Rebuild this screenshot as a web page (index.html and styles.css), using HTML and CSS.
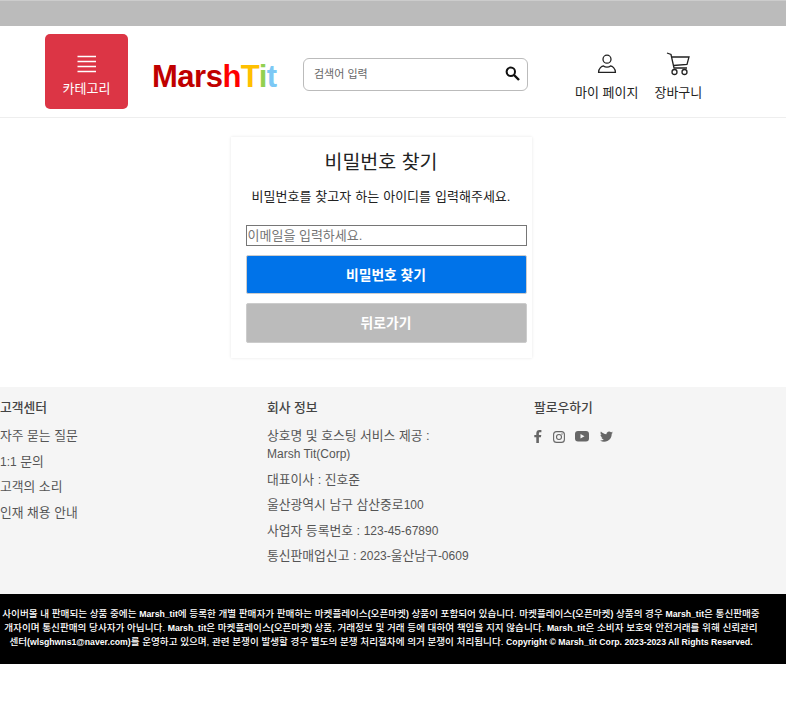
FILE: index.html
```html
<!DOCTYPE html>
<html lang="ko">
<head>
<meta charset="utf-8">
<title>비밀번호 찾기</title>
<link rel="stylesheet" href="styles.css">
</head>
<body>
<div class="topbar"></div>
<header class="header">
  <a class="category">
    <svg class="burger" width="20" height="18" viewBox="0 0 20 18"><path d="M0.500 1.500h18.500M0.500 6.500h18.500M0.500 11.500h18.500M0.500 16.500h18.500" stroke="#fff" stroke-width="1.500" fill="none"/></svg>
    <span>카테고리</span>
  </a>
  <div class="logo"><span class="c-dark">Mars</span><span class="c-red">h</span><span class="c-o">T</span><span class="c-g">i</span><span class="c-b">t</span></div>
  <div class="search">
    <span class="search-text">검색어 입력</span>
    <svg width="15" height="15" viewBox="0 0 15 15"><circle cx="5.800" cy="5.800" r="4.200" fill="none" stroke="#111" stroke-width="2"/><path d="M9 9l5 5" stroke="#111" stroke-width="2.400" fill="none"/></svg>
  </div>
  <nav class="nav">
    <a class="nav-item nav-my">
      <svg width="20" height="20" viewBox="0 0 20 20"><circle cx="10" cy="5.200" r="4" fill="none" stroke="#222" stroke-width="1.300"/><path d="M1.600 18.300c0-4 3.200-6.300 4.900-6.300 1 .8 2.100 1.100 3.500 1.100s2.500-.3 3.500-1.100c1.700 0 4.900 2.300 4.900 6.300z" fill="none" stroke="#222" stroke-width="1.300"/></svg>
      <span>마이 페이지</span>
    </a>
    <a class="nav-item nav-cart">
      <svg width="24" height="24" viewBox="0 0 24 24"><path d="M1 1l4 1.500 3 13.500h13M5.600 5H23l-2 7.500L7.500 13.500" fill="none" stroke="#222" stroke-width="1.300"/><circle cx="8.500" cy="20" r="2.500" fill="none" stroke="#222" stroke-width="1.300"/><circle cx="18.500" cy="20" r="2.500" fill="none" stroke="#222" stroke-width="1.300"/></svg>
      <span>장바구니</span>
    </a>
  </nav>
</header>
<main class="main">
  <section class="card">
    <h1 class="title">비밀번호 찾기</h1>
    <p class="desc">비밀번호를 찾고자 하는 아이디를 입력해주세요.</p>
    <input class="field" type="text" placeholder="이메일을 입력하세요.">
    <button class="btn btn-primary">비밀번호 찾기</button>
    <button class="btn btn-muted">뒤로가기</button>
  </section>
</main>
<footer class="footer">
  <div class="col">
    <h3 class="col-title">고객센터</h3>
    <ul class="links">
      <li>자주 묻는 질문</li>
      <li><span class="latin">1:1</span> 문의</li>
      <li>고객의 소리</li>
      <li>인재 채용 안내</li>
    </ul>
  </div>
  <div class="col">
    <h3 class="col-title">회사 정보</h3>
    <ul class="links">
      <li>상호명 및 호스팅 서비스 제공 :<br><span class="latin">Marsh Tit(Corp)</span></li>
      <li>대표이사 : 진호준</li>
      <li>울산광역시 남구 삼산중로<span class="latin">100</span></li>
      <li>사업자 등록번호 : <span class="latin">123-45-67890</span></li>
      <li>통신판매업신고 : <span class="latin">2023-</span>울산남구<span class="latin">-0609</span></li>
    </ul>
  </div>
  <div class="col">
    <h3 class="col-title">팔로우하기</h3>
    <div class="social">
      <svg width="8" height="13" viewBox="0 0 8 13"><path d="M2.300 13V7.300H.3V5h2V3.300C2.300 1.200 3.500 0 5.400 0c.9 0 1.700.1 2 .1v2.100H6.200c-1 0-1.300.5-1.300 1.200V5h2.400l-.4 2.300h-2V13z" fill="#666"/></svg>
      <svg width="12" height="12" viewBox="0 0 12 12"><rect x=".6" y=".6" width="10.800" height="10.800" rx="3" fill="none" stroke="#666" stroke-width="1.100"/><circle cx="6" cy="6" r="2.500" fill="none" stroke="#666" stroke-width="1.100"/><circle cx="9" cy="3" r=".7" fill="#666"/></svg>
      <svg width="14" height="11" viewBox="0 0 14 11"><rect width="14" height="10.500" rx="3" fill="#666"/><path d="M5.500 3l4 2.300-4 2.300z" fill="#f5f5f5"/></svg>
      <svg width="13" height="11" viewBox="0 0 13 11"><path d="M13 1.500c-.5.200-1 .4-1.500.4.500-.3 1-.8 1.200-1.400-.5.300-1.100.5-1.700.7A2.700 2.700 0 0 0 6.400 3.200C4.200 3.100 2.200 2 .9.500c-.7 1.200-.4 2.800.8 3.600-.4 0-.8-.1-1.200-.3 0 1.300.9 2.400 2.100 2.700-.4.100-.8.100-1.200 0 .3 1.100 1.300 1.800 2.500 1.900A5.400 5.400 0 0 1 0 9.500 7.600 7.600 0 0 0 11.700 2.800c.5-.3.900-.8 1.300-1.300z" fill="#666"/></svg>
    </div>
  </div>
</footer>
<div class="legal">사이버몰 내 판매되는 상품 중에는 <span class="latin">Marsh_tit</span>에 등록한 개별 판매자가 판매하는 마켓플레이스<span class="latin">(</span>오픈마켓<span class="latin">)</span> 상품이 포함되어 있습니다. 마켓플레이스<span class="latin">(</span>오픈마켓<span class="latin">)</span> 상품의 경우 <span class="latin">Marsh_tit</span>은 통신판매중<br>개자이며 통신판매의 당사자가 아닙니다. <span class="latin">Marsh_tit</span>은 마켓플레이스<span class="latin">(</span>오픈마켓<span class="latin">)</span> 상품, 거래정보 및 거래 등에 대하여 책임을 지지 않습니다. <span class="latin">Marsh_tit</span>은 소비자 보호와 안전거래를 위해 신뢰관리<br>센터<span class="latin">(wlsghwns1@naver.com)</span>를 운영하고 있으며, 관련 분쟁이 발생할 경우 별도의 분쟁 처리절차에 의거 분쟁이 처리됩니다. <span class="latin">Copyright © Marsh_tit Corp. 2023-2023 All Rights Reserved.</span></div>
</body>
</html>
```
FILE: styles.css
```css
* { box-sizing: border-box; }
html, body { margin: 0; padding: 0; }
body {
  background: #fff;
  color: #222;
  font-family: "Liberation Sans", "Noto Sans CJK KR", sans-serif;
  overflow-x: hidden;
}
.topbar { height: 26px; background: #bbb; border-top: 1px solid #ccc; }
.header {
  height: 92px;
  border-bottom: 1px solid #eee;
  display: flex;
  align-items: flex-start;
  padding: 8px 0 0 45px;
}
.category {
  width: 83px;
  height: 75px;
  background: #dc3545;
  border-radius: 5px;
  color: #fff;
  font-size: 13px;
  display: flex;
  flex-direction: column;
  align-items: center;
  padding-top: 21px;
  gap: 7px;
  flex: none;
}
.category span { line-height: 18px; }
.logo {
  margin: 24px 0 0 24px;
  width: 126px;
  font-size: 31px;
  line-height: 38px;
  letter-spacing: -.5px;
  font-weight: 700;
  flex: none;
  white-space: nowrap;
}
.c-dark { color: #c00000; }
.c-red { color: #ff0000; }
.c-o { color: #ffc000; }
.c-g { color: #92d050; }
.c-b { color: #7cc8f5; }
.search {
  margin: 24px 0 0 25px;
  width: 225px;
  height: 33px;
  border: 1px solid #bbb;
  border-radius: 6px;
  display: flex;
  align-items: center;
  justify-content: space-between;
  padding: 0 7px 3px 10px;
  flex: none;
}
.search-text { font-size: 11px; color: #666; }
.nav { display: flex; margin: 17px 0 0 47px; gap: 16px; }
.nav-item {
  display: flex;
  flex-direction: column;
  align-items: center;
  font-size: 13px;
  color: #222;
  white-space: nowrap;
}
.nav-item svg { height: 26px; }
.nav-item span { line-height: 18px; margin-top: 7px; }
.main { height: 269px; padding: 19px 24px 0 0; display: flex; justify-content: center; }
.card {
  width: 301px;
  height: 221px;
  box-shadow: 0 0 3px rgba(0, 0, 0, .1);
  padding: 12px 15px 0;
  display: flex;
  flex-direction: column;
}
.title { margin: 0; font-size: 19.500px; font-weight: 400; line-height: 27px; text-align: center; color: #222; }
.desc { margin: 12px 0 0; font-size: 13px; word-spacing: .4px; line-height: 18px; text-align: center; color: #222; white-space: nowrap; }
.field {
  margin-top: 19px;
  width: 281px;
  height: 21px;
  border: 1px solid #767676;
  padding: 0 1px;
  font: 13px "Liberation Sans", "Noto Sans CJK KR", sans-serif;
  outline: none;
}
.field::placeholder { color: #757575; opacity: 1; }
.btn {
  display: block;
  width: 281px;
  border: 1px solid #ccc;
  border-radius: 2px;
  font: 700 13.800px "Liberation Sans", "Noto Sans CJK KR", sans-serif;
  color: #fff;
  padding: 0 0 2px;
}
.btn-primary { height: 39px; margin-top: 9px; background: #0073e9; }
.btn-muted { height: 40px; margin-top: 9px; background: #bbb; }
.footer {
  height: 207px;
  background: #f5f5f5;
  display: grid;
  grid-template-columns: 267px 267px 252px;
  padding-top: 13px;
  color: #555;
  font-size: 12.800px;
}
.latin { font-size: 12px; }
.col-title { margin: 0; font-size: 12.800px; line-height: 16px; font-weight: 500; color: #444; }
.links { list-style: none; margin: 11.400px 0 0; padding: 0; }
.links li { line-height: 18px; margin-bottom: 7.400px; }
.social { display: flex; align-items: center; gap: 10.500px; margin-top: 14px; height: 13px; }
.legal {
  height: 70px;
  background: #000;
  color: #fff;
  font-size: 9.600px;
  font-weight: 500;
  line-height: 14px;
  text-align: center;
  white-space: nowrap;
  overflow: hidden;
  padding: 13px 24px 0 0;
}
.legal .latin { font-size: 8.700px; font-weight: 700; }
```
